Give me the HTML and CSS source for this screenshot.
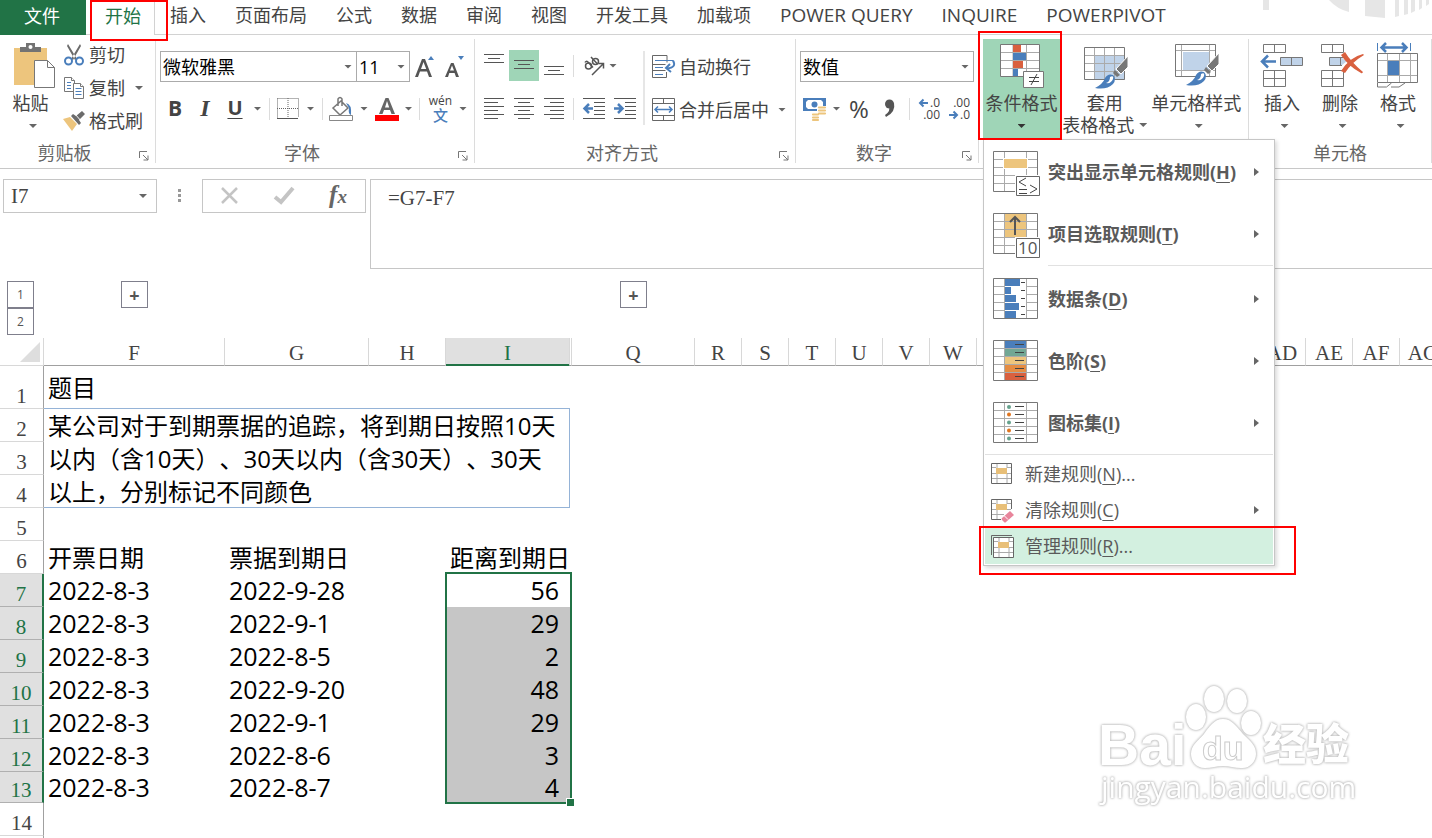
FILE: index.html
```html
<!DOCTYPE html>
<html lang="zh-CN">
<head>
<meta charset="utf-8">
<title>Excel</title>
<link rel="stylesheet" href="styles.css">
</head>
<body>
<header class="tabs">
  <button class="tab file">文件</button>
  <button class="tab active">开始<span class="mark mark-tab"></span></button>
  <button class="tab">插入</button>
  <button class="tab">页面布局</button>
  <button class="tab">公式</button>
  <button class="tab">数据</button>
  <button class="tab">审阅</button>
  <button class="tab">视图</button>
  <button class="tab">开发工具</button>
  <button class="tab">加载项</button>
  <button class="tab latin">POWER QUERY</button>
  <button class="tab latin">INQUIRE</button>
  <button class="tab latin">POWERPIVOT</button>
  <svg class="deco" width="182" height="30" viewBox="0 0 182 30" fill="#e6e6e6">
    <path d="M13 0h6v10h-6zM79 0h20v12Q87 9 79 0zM115 0h20v18l-20-2zM145 0h4v16l-4 1zM154 0h4v14l-4 1zM161 0h4v11l-4 2zM169 0h3v8l-3 2zM176 0h3v4l-3 2z"/>
  </svg>
</header>

<section class="ribbon">
  <div class="group g-clip">
    <div class="body">
      <button class="big paste">
        <svg width="42" height="46" viewBox="0 0 42 46"><path d="M0 5h33v37H0z" fill="#edc57d"/><path d="M6 9V4h6V0h9v4h6v5z" fill="#737373"/><circle cx="16.500" cy="4" r="2" fill="#fff"/><path d="M20.500 17.500h13l7 7v20h-20z" fill="#fff" stroke="#777"/><path d="M33.500 17.500v7h7" fill="none" stroke="#777"/></svg>
        <span>粘贴</span><i class="dn"></i>
      </button>
      <div class="stack">
        <button class="cmd"><svg width="20" height="22" viewBox="0 0 20 22"><path d="M4 0l9 15-2 1L3 2zM16 0L7 15l2 1 8-14z" fill="#6b6b6b"/><g fill="none" stroke="#4a7ebb" stroke-width="2"><circle cx="4.500" cy="17" r="3.500"/><circle cx="15.500" cy="17" r="3.500"/></g></svg>剪切</button>
        <button class="cmd"><svg width="20" height="22" viewBox="0 0 20 22" fill="#fff" stroke="#777"><path d="M.5.500h7l3 3v11H.5z"/><path d="M7.500.500v3h3" /><path d="M3 5.500h4M3 8.500h4M3 11.500h4" stroke="#4a7ebb"/><path d="M9.500 6.500h7l3 3v12h-10z"/><path d="M16.500 6.500v3h3"/><path d="M11.500 11.500h6M11.500 14.500h6M11.500 17.500h6" stroke="#4a7ebb"/></svg>复制<i class="dn"></i></button>
        <button class="cmd"><svg width="20" height="20" viewBox="0 0 20 20"><path d="M-1 8l7-2 7 7-5 7z" fill="#edc57d"/><path d="M7 5l2-2 3 2 6-5 3 3-6 6 2 3-2 2z" fill="#6b6b6b"/><path d="M10.500 2.500l8 9" stroke="#fff"/></svg>格式刷</button>
      </div>
    </div>
    <div class="label">剪贴板<svg class="launch" width="10" height="10" viewBox="0 0 10 10"><path d="M.5 7V.500H8M4 4l5 5M9 4.500V9H4.500" fill="none" stroke="#777"/></svg></div>
  </div>

  <div class="group g-font">
    <div class="body rows">
      <div class="row">
        <label class="drop drop-font"><select aria-label="字体"><option>微软雅黑</option></select><i class="dn"></i></label>
        <label class="drop drop-size"><select aria-label="字号"><option>11</option></select><i class="dn"></i></label>
        <button class="ico"><svg width="30" height="26" viewBox="0 0 30 26"><path d="M5 23L12 5h3l7 18h-3l-2-5.500H10L8 23zM11 15h5.200L13.500 8z" fill="#555"/><path d="M18 6l3-4 3 4z" fill="#4a7ebb"/></svg></button>
        <button class="ico"><svg width="30" height="26" viewBox="0 0 30 26"><path d="M5 23L11 9h2.600L19 23h-3l-1.400-4H9.300L8 23zM10 16.500h4L12 11.500z" fill="#555"/><path d="M18 2h6l-3 4z" fill="#4a7ebb"/></svg></button>
      </div>
      <div class="row font-tools">
        <button class="ico bold">B</button><button class="ico ital">I</button><button class="ico under">U</button><i class="dn"></i><i class="sep"></i>
        <button class="ico"><svg width="22" height="22" viewBox="0 0 22 22"><path d="M.5.500h21v19M.5.500v19M11 0v20M0 10.500h21" fill="none" stroke="#666" stroke-dasharray="1 1"/><path d="M0 20.500h21" stroke="#555"/></svg></button><i class="dn"></i><i class="sep"></i>
        <button class="ico"><svg width="25" height="24" viewBox="0 0 25 24"><path d="M12 4l7 7-8 7-7-7zM9 9V2q2-3 4 0v7" fill="#fff" stroke="#777" stroke-width="1.500"/><path d="M17 6q6 1 5 12-3-1-2-7z" fill="#4a7ebb"/><path d="M.5 18.500h23v5H.5z" fill="#fff" stroke="#888"/></svg></button><i class="dn"></i>
        <button class="ico"><svg width="24" height="24" viewBox="0 0 24 24"><path d="M4 17L10.500 1h3L20 17h-3.500L15 13H9l-1.500 4zM10 10.500h4.200L12 4z" fill="#666"/><path d="M0 18h24v6H0z" fill="#f00"/></svg></button><i class="dn"></i><i class="sep"></i>
        <button class="ico pinyin"><span>wén</span><b>文</b></button><i class="dn"></i>
      </div>
    </div>
    <div class="label">字体<svg class="launch" width="10" height="10" viewBox="0 0 10 10"><path d="M.5 7V.500H8M4 4l5 5M9 4.500V9H4.500" fill="none" stroke="#777"/></svg></div>
  </div>

  <div class="group g-align">
    <div class="body">
      <div class="align-tools">
        <button class="ico"><svg width="20" height="22" viewBox="0 0 20 22"><path d="M0 -.500h20M4 3.500h12M0 7.500h20" stroke="#555"/></svg></button>
        <button class="ico on"><svg width="20" height="22" viewBox="0 0 20 22"><path d="M0 5.500h20M4 9.500h12M0 13.500h20" stroke="#555"/></svg></button>
        <button class="ico"><svg width="20" height="22" viewBox="0 0 20 22"><path d="M0 11.500h20M4 15.500h12M0 19.500h20" stroke="#555"/></svg></button>
        <i class="sep"></i>
        <button class="ico"><svg width="22" height="22" viewBox="0 0 22 22"><g fill="none" stroke="#555" stroke-width="1.500"><circle cx="5.500" cy="11" r="3"/><path d="M2 7.500q1-2 3-.5l5 5.500M8 2l6.500 7"/><circle cx="12.500" cy="6.500" r="3"/><path d="M9 20L20 9M15.500 8.500H20.500V13.500"/></g></svg></button>
        <i class="dn dn-left"></i>
        <button class="ico"><svg width="20" height="22" viewBox="0 0 20 22"><path d="M0 .500h20M0 4.500h14M0 8.500h20M0 12.500h14M0 16.500h20M0 20.500h14" stroke="#555"/></svg></button>
        <button class="ico"><svg width="20" height="22" viewBox="0 0 20 22"><path d="M0 .500h20M4 4.500h12M0 8.500h20M4 12.500h12M0 16.500h20M4 20.500h12" stroke="#555"/></svg></button>
        <button class="ico"><svg width="20" height="22" viewBox="0 0 20 22"><path d="M0 .500h20M6 4.500h14M0 8.500h20M6 12.500h14M0 16.500h20M6 20.500h14" stroke="#555"/></svg></button>
        <i class="sep"></i>
        <button class="ico"><svg width="22" height="22" viewBox="0 0 22 22"><path d="M0 .500h22M11 4.500h11M11 8.500h11M11 12.500h11M11 16.500h11M0 20.500h22" stroke="#555"/><path d="M10 10.500H2M6 6l-4.500 4.500L6 15" fill="none" stroke="#4a7ebb" stroke-width="2.500"/></svg></button>
        <button class="ico"><svg width="22" height="22" viewBox="0 0 22 22"><path d="M0 .500h22M11 4.500h11M11 8.500h11M11 12.500h11M11 16.500h11M0 20.500h22" stroke="#555"/><path d="M0 10.500h8M4 6l4.500 4.500L4 15" fill="none" stroke="#4a7ebb" stroke-width="2.500"/></svg></button>
      </div>
      <i class="tall-sep"></i>
      <div class="merge-tools">
        <button class="cmd"><svg width="24" height="24" viewBox="0 0 24 24" fill="none"><path d="M15 7.500V.500H.5v22h14V17M.5 9.500h13M.5 15.500h13" stroke="#666"/><path d="M3 5.500h18M3 12.500h8M3 19.500h8" stroke="#4a7ebb"/><path d="M21 5.500q4 7-6 8M18 9l-4 4 5 4" stroke="#4a7ebb" stroke-width="2"/></svg>自动换行</button>
        <button class="cmd"><svg width="24" height="24" viewBox="0 0 24 24" fill="none"><path d="M.5.500h22v22H.5zM.5 5.500h22M.5 17.500h22M11.500.500v5M11.500 17.500v5" stroke="#666"/><path d="M3 11.500h17M6 8.500l-3 3 3 3M17 8.500l3 3-3 3" stroke="#4a7ebb" stroke-width="1.500"/></svg>合并后居中<i class="dn"></i></button>
      </div>
    </div>
    <div class="label">对齐方式<svg class="launch" width="10" height="10" viewBox="0 0 10 10"><path d="M.5 7V.500H8M4 4l5 5M9 4.500V9H4.500" fill="none" stroke="#777"/></svg></div>
  </div>

  <div class="group g-num">
    <div class="body rows">
      <div class="row">
        <label class="drop drop-num"><select aria-label="数字格式"><option>数值</option></select><i class="dn"></i></label>
      </div>
      <div class="row num-tools">
        <button class="ico"><svg width="24" height="24" viewBox="0 0 24 24"><path d="M0 1h23v13H0z" fill="#4a7ebb"/><path d="M3 3h17v9H3z" fill="#fff"/><path d="M2 2h4L2 6zM21 2v4l-4-4zM2 13h4L2 9z" fill="#4a7ebb"/><circle cx="11.500" cy="7.500" r="3" fill="#4a7ebb"/><path d="M14 9h10v8h-7v6H7v-7h7z" fill="#fff"/><path d="M16 10.500h6M16 13.500h6M16 16.500h6M10 17.500h5M10 20.500h5M10 23h5" stroke="#edc57d" stroke-width="2.200" stroke-linecap="round"/></svg></button><i class="dn"></i>
        <button class="ico pct">%</button>
        <button class="ico"><svg width="12" height="20" viewBox="0 0 12 20"><circle cx="5.500" cy="5" r="4.500" fill="#555"/><path d="M10 4q2 9-8 14l-1-2q6-4 4-9z" fill="#555"/></svg></button>
        <i class="sep"></i>
        <button class="ico dec"><span><svg width="9" height="8" viewBox="0 0 9 8"><path d="M9 4H1M4.500 .500L1 4l3.500 3.500" fill="none" stroke="#4a7ebb" stroke-width="2"/></svg>.0</span><span>.00</span></button>
        <button class="ico dec"><span>.00</span><span><svg width="9" height="8" viewBox="0 0 9 8"><path d="M0 4h8M4.500 .500L8 4 4.500 7.500" fill="none" stroke="#4a7ebb" stroke-width="2"/></svg>.0</span></button>
      </div>
    </div>
    <div class="label">数字<svg class="launch" width="10" height="10" viewBox="0 0 10 10"><path d="M.5 7V.500H8M4 4l5 5M9 4.500V9H4.500" fill="none" stroke="#777"/></svg></div>
  </div>

  <div class="group g-style">
    <div class="body">
      <div class="cond">
        <button class="big big-on">
          <svg width="44" height="46" viewBox="0 0 44 46"><path d="M.5 1.500h39v32H.5z" fill="#fff"/><path d="M13 1v33M26.500 1v33M1 9.500h39M1 17.500h39M1 25.500h39" stroke="#aaa"/><path d="M13 2h8v7h-8zM13 18h10v7H13z" fill="#d9603f"/><path d="M13 10h13v7H13zM13 26h5v7h-5z" fill="#4a7ebb"/><path d="M.5 1.500h39v32H.5z" fill="none" stroke="#777"/><path d="M23.500 28.500h20v16h-20z" fill="#fff" stroke="#777"/><path d="M29 34.500h10M29 38.500h10M37 31l-6 11" stroke="#444"/></svg>
          <span>条件格式</span><i class="dn dark"></i>
        </button>
        <div class="menu" role="menu">
          <button class="item lg" role="menuitem"><svg width="48" height="46" viewBox="0 0 48 46"><path d="M.5.500h44v40H.5z" fill="#fff" stroke="#777"/><path d="M11.500 1v39M33.500 1v39M1 8.500h43M1 16.500h43M1 24.500h43M1 32.500h43" stroke="#aaa"/><path d="M12 1h21v7H12z" fill="#fff"/><path d="M10 7h25v11H10z" fill="#fff"/><path d="M11 8h23v9H11z" fill="#edc57d"/><path d="M22 24h26v22H22z" fill="#fff"/><path d="M23.500 25.500h23v19h-23z" fill="#fff" stroke="#666"/><path d="M33 27l-7 4 7 4M26 38.500h8M26 42.500h8M37 34l7 4-7 4" fill="none" stroke="#444"/></svg><span>突出显示单元格规则(<u>H</u>)</span><i class="rt"></i></button>
          <button class="item lg" role="menuitem"><svg width="48" height="46" viewBox="0 0 48 46"><path d="M.5.500h44v40H.5z" fill="#fff"/><path d="M12 1h21v23H12z" fill="#edc57d"/><path d="M11.500 1v39M33.500 1v39M1 8.500h43M1 16.500h43M1 24.500h43M1 32.500h43" stroke="#aaa"/><path d="M.5.500h44v40H.5z" fill="none" stroke="#777"/><path d="M22 22V4M17 9l5-5 5 5" fill="none" stroke="#555" stroke-width="2"/><path d="M22 24h26v22H22z" fill="#fff"/><path d="M23.500 25.500h23v19h-23z" fill="#fff" stroke="#666"/><text x="25" y="41" font-family="Open Sans" font-weight="400" font-size="17" fill="#555">10</text></svg><span>项目选取规则(<u>T</u>)</span><i class="rt"></i></button>
          <hr class="inset">
          <button class="item lg" role="menuitem"><svg width="48" height="46" viewBox="0 0 48 46"><path d="M.5.500h44v40H.5z" fill="#fff"/><path d="M11.500 1v39M33.500 1v39M1 8.500h43M1 16.500h43M1 24.500h43M1 32.500h43" stroke="#aaa"/><path d="M12 1h21v39H12z" fill="#fff"/><path d="M12 1h15v7H12zM12 9h6v7h-6zM12 17h11v7H12zM12 25h14v7H12zM12 33h11v7H12z" fill="#4a7ebb"/><path d="M.5.500h44v40H.5z" fill="none" stroke="#777"/><path d="M28 4.500h4M28 12.500h4M28 20.500h4M28 28.500h4M28 36.500h4" stroke="#444"/></svg><span>数据条(<u>D</u>)</span><i class="rt"></i></button>
          <button class="item lg" role="menuitem"><svg width="48" height="46" viewBox="0 0 48 46"><path d="M.5.500h44v40H.5z" fill="#fff"/><path d="M12 1h21v8H12z" fill="#4a7ebb"/><path d="M12 9h21v8H12z" fill="#72a794"/><path d="M12 17h21v8H12z" fill="#edc57d"/><path d="M12 25h21v8H12z" fill="#e58c42"/><path d="M12 33h21v7H12z" fill="#d9603f"/><path d="M11.500 1v39M33.500 1v39M1 8.500h43M1 16.500h43M1 24.500h43M1 32.500h43" stroke="#aaa"/><path d="M.5.500h44v40H.5z" fill="none" stroke="#777"/><path d="M22 4.500h9M22 12.500h9M22 20.500h9M22 28.500h9M22 36.500h9" stroke="#444"/></svg><span>色阶(<u>S</u>)</span><i class="rt"></i></button>
          <button class="item lg" role="menuitem"><svg width="48" height="46" viewBox="0 0 48 46"><path d="M.5.500h44v40H.5z" fill="#fff"/><path d="M11.500 1v39M33.500 1v39M1 8.500h43M1 16.500h43M1 24.500h43M1 32.500h43" stroke="#aaa"/><path d="M.5.500h44v40H.5z" fill="none" stroke="#777"/><g fill="#66a28d"><circle cx="16" cy="5" r="2"/><circle cx="16" cy="20.500" r="2"/><circle cx="16" cy="36.500" r="2"/></g><g fill="#e0751f"><circle cx="16" cy="12.500" r="2"/><circle cx="16" cy="28.500" r="2"/></g><path d="M22 4.500h9M22 12.500h9M22 20.500h9M22 28.500h9M22 36.500h9" stroke="#444"/></svg><span>图标集(<u>I</u>)</span><i class="rt"></i></button>
          <hr>
          <button class="item" role="menuitem"><svg width="24" height="24" viewBox="0 0 24 24"><path d="M.5 1.500h20v20H.5z" fill="#fff"/><path d="M6 2v4M16 2v4M1 5.500h4M16 5.500h4M1 11.500h4M16 11.500h4M1 16.500h19M6 12v9M16 12v9" stroke="#aaa"/><path d="M5 6h11v6H5z" fill="#e8bf78"/><path d="M.5 1.500h20v20H.5z" fill="none" stroke="#666"/></svg><span>新建规则(<u>N</u>)...</span></button>
          <button class="item" role="menuitem"><svg width="24" height="24" viewBox="0 0 24 24"><path d="M6 2v4M16 2v4M1 5.500h4M16 5.500h4M1 11.500h4M16 11.500h4M1 16.500h12M6 12v9" stroke="#aaa"/><path d="M5 6h11v6H5z" fill="#e8bf78"/><path d="M20.500 11V1.500H.5v20H10" fill="none" stroke="#666"/><path d="M11 20l8-7 4 4-8 7q-1 1-2 0l-2-2q-1-1 0-2z" fill="#e8859b"/><path d="M13 17.500l4 4" stroke="#fff"/></svg><span>清除规则(<u>C</u>)</span><i class="rt"></i></button>
          <button class="item hot" role="menuitem"><svg width="24" height="24" viewBox="0 0 24 24"><path d="M.5 21V1.500H21" fill="none" stroke="#666"/><path d="M2.500 3.500h20v20h-20z" fill="#fff"/><path d="M8 4v4M18 4v4M3 7.500h4M18 7.500h4M3 13.500h4M18 13.500h4M3 18.500h19M8 14v9M18 14v9" stroke="#aaa"/><path d="M7 8h11v6H7z" fill="#e8bf78"/><path d="M2.500 3.500h20v20h-20z" fill="none" stroke="#666"/></svg><span>管理规则(<u>R</u>)...</span><span class="mark mark-item"></span></button>
        </div>
        <span class="mark mark-cond"></span>
      </div>
      <button class="big wide">
        <svg width="42" height="46" viewBox="0 0 42 46"><path d="M.5 4.500h40v32H.5z" fill="#fff"/><path d="M11 13h30v24H11z" fill="#c0d3e9"/><path d="M10.500 5v31M20.500 5v31M30.500 5v31M1 12.500h39M1 20.500h39M1 28.500h39" stroke="#aaa"/><path d="M.5 4.500h40v32H.5z" fill="none" stroke="#777"/><path d="M44 13v11l-7 7-5-5z" fill="#777" stroke="#fff"/><path d="M31 27l5 5-3 2-4-4z" fill="#777"/><path d="M11 45q8-4 10-10 3-5 8-3 4 4 0 9-6 6-18 4z" fill="#4a7ebb"/><path d="M26 34q4-2 3 2-2 5-7 4 4-1 4-6z" fill="#fff"/></svg>
        <span>套用</span><span class="second">表格格式<i class="dn"></i></span>
      </button>
      <button class="big xwide">
        <svg width="42" height="46" viewBox="0 0 42 46"><path d="M.5 1.500h40v32H.5z" fill="#fff"/><path d="M6.500 2v31M34.500 2v31M1 7.500h39M1 27.500h39" stroke="#aaa"/><path d="M8 9h26v18H8z" fill="#c0d3e9"/><path d="M.5 1.500h40v32H.5z" fill="none" stroke="#777"/><path d="M44 10v11l-7 7-5-5z" fill="#777" stroke="#fff"/><path d="M31 24l5 5-3 2-4-4z" fill="#777"/><path d="M11 42q8-4 10-10 3-5 8-3 4 4 0 9-6 6-18 4z" fill="#4a7ebb"/><path d="M26 31q4-2 3 2-2 5-7 4 4-1 4-6z" fill="#fff"/></svg>
        <span>单元格样式</span><i class="dn"></i>
      </button>
    </div>
    <div class="label"></div>
  </div>

  <div class="group g-cell">
    <div class="body">
      <button class="big cellbtn"><svg width="44" height="46" viewBox="0 0 44 46" fill="none"><path d="M3.500 1.500h22v8h-22zM14.500 1.500v8M3.500 27.500h22v16h-22zM14.500 27.500v16M3.500 35.500h22" stroke="#777"/><path d="M20.500 14.500h22v8h-22z" fill="#c0d3e9" stroke="#777"/><path d="M31.500 14.500v8" stroke="#777"/><path d="M16 18.500H2M8 12.500l-6 6 6 6" stroke="#4a7ebb" stroke-width="2.500"/></svg><span>插入</span><i class="dn"></i></button>
      <button class="big cellbtn"><svg width="44" height="46" viewBox="0 0 44 46" fill="none"><path d="M3.500 1.500h22v8h-22zM14.500 1.500v8M3.500 27.500h22v16h-22zM14.500 27.500v16M3.500 35.500h22" stroke="#777"/><path d="M11.500 14.500h12l5 4-5 4h-12z" fill="#c0d3e9"/><path d="M26 14.500H11.500v8H24M22.500 14.500v8" stroke="#777"/><path d="M23 12l4-3q6 10 18 20-1 2-2 1Q30 23 23 12zM45 11l1 1Q34 19 27 30l-4-2Q32 14 45 11z" fill="#d9603f"/></svg><span>删除</span><i class="dn"></i></button>
      <button class="big cellbtn"><svg width="44" height="46" viewBox="0 0 44 46" fill="none"><path d="M1.500 0v8M34.500 0v8" stroke="#4a7ebb"/><path d="M6 4.500h24M10 0L5.500 4.500 10 9M26 0l4.500 4.500L26 9" stroke="#4a7ebb" stroke-width="2.500"/><path d="M11.500 11v28M23.500 11v28M34.500 11v28M2 17.500h39M2 32.500h39" stroke="#aaa"/><path d="M1.500 10.500h40v29h-40z" stroke="#777"/><path d="M12 18h11v14H12z" fill="#4a7ebb"/><path d="M1.500 40v4h9l5-4M15 44h8l6-4" stroke="#777"/></svg><span>格式</span><i class="dn"></i></button>
    </div>
    <div class="label">单元格</div>
  </div>
</section>

<section class="formula-bar">
  <div class="name-box"><input aria-label="名称框" value="I7"><i class="dn"></i></div>
  <svg class="dots" width="4" height="34" viewBox="0 0 4 34" fill="#999"><path d="M0 10h3v3H0zM0 15h3v3H0zM0 20h3v3H0z"/></svg>
  <div class="fx">
    <button class="ico" aria-label="取消"><svg width="18" height="18" viewBox="0 0 18 18"><path d="M1 1l15 15M16 1L1 16" stroke="#c4c4c4" stroke-width="2.500"/></svg></button>
    <button class="ico" aria-label="输入"><svg width="20" height="18" viewBox="0 0 20 18"><path d="M1 10l6 5L19 1" fill="none" stroke="#c4c4c4" stroke-width="4"/></svg></button>
    <button class="ico fxt">f<small>x</small></button>
  </div>
  <textarea aria-label="编辑栏">=G7-F7</textarea>
</section>

<main class="sheet">
  <div class="outline">
    <div class="levels"><button>1</button><button>2</button></div>
    <button class="plus p1">+</button>
    <button class="plus p2">+</button>
  </div>
  <table class="grid">
    <colgroup><col class="c-h"><col class="c-f"><col class="c-g"><col class="c-hh"><col class="c-i"><col class="c-x"><col class="c-q"><col class="c-n" span="16"></colgroup>
    <thead>
      <tr><th class="corner"><svg width="20" height="20" viewBox="0 0 20 20"><path d="M20 0v20H0z" fill="#dedede"/></svg></th><th>F</th><th>G</th><th>H</th><th class="sel">I</th><th></th><th>Q</th><th>R</th><th>S</th><th>T</th><th>U</th><th>V</th><th>W</th><th></th><th></th><th></th><th></th><th></th><th></th><th>AD</th><th>AE</th><th>AF</th><th>AG</th></tr>
    </thead>
    <tbody>
      <tr class="r1"><th>1</th><td>题目</td></tr>
      <tr><th>2</th><td class="note" colspan="4" rowspan="3">某公司对于到期票据的追踪，将到期日按照10天<br>以内（含10天）、30天以内（含30天）、30天<br>以上，分别标记不同颜色</td></tr>
      <tr><th>3</th></tr>
      <tr><th>4</th></tr>
      <tr><th>5</th></tr>
      <tr><th>6</th><td>开票日期</td><td>票据到期日</td><td></td><td class="head">距离到期日</td></tr>
      <tr class="s"><th>7</th><td>2022-8-3</td><td>2022-9-28</td><td></td><td class="num first">56<span class="selection"></span></td></tr>
      <tr class="s"><th>8</th><td>2022-8-3</td><td>2022-9-1</td><td></td><td class="num">29</td></tr>
      <tr class="s"><th>9</th><td>2022-8-3</td><td>2022-8-5</td><td></td><td class="num">2</td></tr>
      <tr class="s"><th>10</th><td>2022-8-3</td><td>2022-9-20</td><td></td><td class="num">48</td></tr>
      <tr class="s"><th>11</th><td>2022-8-3</td><td>2022-9-1</td><td></td><td class="num">29</td></tr>
      <tr class="s"><th>12</th><td>2022-8-3</td><td>2022-8-6</td><td></td><td class="num">3</td></tr>
      <tr class="s r13"><th>13</th><td>2022-8-3</td><td>2022-8-7</td><td></td><td class="num">4</td></tr>
      <tr><th>14</th></tr>
      <tr><th></th></tr>
    </tbody>
  </table>
</main>

<svg class="watermark" width="270" height="134" viewBox="0 0 270 134" fill="#fff">
  <text x="3" y="81" font-family="Liberation Sans" font-weight="700" font-size="57">Bai</text>
  <ellipse cx="101" cy="33" rx="10" ry="13"/>
  <ellipse cx="119" cy="15" rx="10" ry="13"/>
  <ellipse cx="142" cy="17" rx="10" ry="12"/>
  <ellipse cx="156" cy="39" rx="10" ry="12"/>
  <path d="M128 35c9 0 14 8 20 15 7 7 13 11 13 20 0 8-7 15-15 14-6 0-12-2-18-2s-12 2-18 2c-9 0-14-7-14-14 0-9 7-13 13-20 5-7 10-15 19-15z"/>
  <text class="wm-du" x="107" y="76" font-family="Liberation Sans" font-weight="700" font-size="34">du</text>
  <text x="168" y="76" font-family="Noto Sans CJK SC" font-weight="900" font-size="43">经验</text>
  <text x="6" y="114" font-family="Open Sans" font-size="30">jingyan.baidu.com</text>
</svg>
</body>
</html>
```

FILE: styles.css
```css
* { box-sizing: border-box; }
body {
  margin: 0;
  height: 100vh;
  overflow: hidden;
  background: #fff;
  color: #444;
  font-family: "Open Sans", "Noto Sans CJK SC", sans-serif;
  font-size: 18px;
  line-height: 24px;
}
button, input, select, textarea { font: inherit; color: inherit; margin: 0; padding: 0; border: 0; background: none; border-radius: 0; }
button { cursor: pointer; }
svg { display: block; flex: none; overflow: visible; }
i { font-style: normal; }

.dn { flex: none; width: 8px; height: 4px; background: #666; clip-path: polygon(0 0, 100% 0, 50% 100%); justify-self: center; align-self: center; }
.dn.dark { background: #333; }
.rt { width: 5px; height: 8px; background: #666; clip-path: polygon(0 0, 100% 50%, 0 100%); }
.sep { width: 1px; height: 22px; background: #dcdcdc; justify-self: center; align-self: center; }
.mark { position: absolute; border: 2px solid #f00; pointer-events: none; z-index: 5; }

/* tabs */
.tabs { position: relative; display: flex; gap: 1px; height: 35px; border-bottom: 1px solid #d2d2d2; }
.tab { position: relative; height: 34px; padding: 0 14px 4px; white-space: nowrap; }
.latin { font-size: 19px; }
.file { width: 86px; height: 35px; padding-left: 12px; background: #217346; color: #fff; }
.tab.active { height: 35px; margin-left: 4px; border: solid #d2d2d2; border-width: 0 1px; padding: 0 13px 4px; background: #fff; color: #217346; }
.mark-tab { inset: 0 -14px -6px -2px; }
.deco { position: absolute; right: 0; top: 0; }

/* ribbon */
.ribbon { display: flex; padding: 4px 0 5px; border-bottom: 1px solid #c8c8c8; height: 134px; }
.group { display: flex; flex-direction: column; flex: none; border-right: 1px solid #dcdcdc; }
.g-clip { width: 156px; }
.g-font { width: 319px; }
.g-align { width: 321px; }
.g-num { width: 183px; }
.g-style { width: 270px; }
.g-cell { width: 183px; }
.body { display: flex; align-items: flex-start; height: 106px; padding: 0 4px; }
.rows { flex-direction: column; padding-top: 12px; gap: 11px; }
.row { display: flex; align-items: center; height: 31px; }
.label { display: flex; align-items: center; justify-content: center; position: relative; height: 20px; padding-right: 26px; color: #666; }
.launch { position: absolute; right: 6px; bottom: 2px; }
.ico { display: flex; align-items: center; justify-content: center; height: 30px; min-width: 30px; }
.big { position: relative; display: flex; flex-direction: column; align-items: center; height: 100px; padding-top: 4px; white-space: nowrap; }
.big > span { line-height: 22px; padding-top: 3px; }
.big > .dn { margin-top: 10px; }
.paste { width: 58px; padding-left: 3px; }
.paste > span { margin-left: -8px; }
.paste > .dn { margin-left: -3px; }
.stack { display: flex; flex-direction: column; }
.cmd { display: flex; align-items: center; gap: 5px; height: 33px; white-space: nowrap; }
.stack .cmd { padding: 0 0 1px 2px; }
.cmd .dn { margin-left: 5px; }

.drop { display: grid; height: 31px; border: 1px solid #ababab; color: #000; }
.drop select { grid-area: 1 / 1; appearance: none; padding-left: 2px; outline: 0; }
.drop .dn { grid-area: 1 / 1; justify-self: end; margin-right: 4px; pointer-events: none; }
.drop-font { width: 197px; margin-right: -1px; }
.drop-size { width: 54px; }
.drop-num { width: 174px; }
.font-tools { display: grid; grid-template-columns: 30px 30px 30px 15px 8px 30px 15px 8px 31px 14px 31px 13px 9px 33px 12px; }
.bold { font-size: 21px; font-weight: 700; padding-bottom: 2px; }
.ital { font-family: "Liberation Serif", serif; font-size: 24px; font-weight: 700; font-style: italic; padding-bottom: 2px; }
.under { font-size: 20px; font-weight: 700; padding-bottom: 2px; text-decoration: underline; text-decoration-thickness: 1px; text-underline-offset: 3px; }
.pinyin { flex-direction: column; font-size: 12px; line-height: 12px; }
.pinyin b { font-weight: 500; font-size: 15px; line-height: 16px; color: #4a7ebb; }

.align-tools { display: grid; grid-template-columns: 30px 30px 30px 9px 31px 31px; grid-template-rows: 31px 31px; row-gap: 12px; padding-top: 11px; align-items: center; }
.align-tools .ico { height: 31px; }
.align-tools .dn-left { justify-self: start; }
.ico.on { background: #9fd5b7; }
.tall-sep { width: 2px; height: 74px; margin: 12px 7px 0 3px; background: #e6e6e6; }
.merge-tools { display: flex; flex-direction: column; gap: 10px; padding-top: 11px; }
.merge-tools .cmd { gap: 3px; }
.merge-tools .dn { margin-left: 6px; }
.num-tools { display: grid; grid-template-columns: 30px 13px 32px 30px 9px 30px 30px; }
.pct { font-size: 24px; }
.dec { flex-direction: column; align-items: flex-end; padding-right: 4px; font-size: 12px; line-height: 12px; }
.dec span { display: flex; align-items: center; gap: 2px; }

.cond { position: relative; }
.g-style .body { padding: 0 4px; }
.big-on { width: 78px; padding-right: 1px; background: #9fd5b7; }
.wide { width: 88px; }
.xwide { width: 96px; }
.xwide > .dn, .cellbtn > .dn { margin-left: 5px; }
.second { display: flex; align-items: center; gap: 5px; }
.big > .second { padding-top: 0; }
.cellbtn { width: 58px; }
.g-cell .label { padding-right: 0; }
.mark-cond { inset: -8px -1px -1px -5px; }

/* drop-down menu */
.menu { position: absolute; z-index: 4; top: 100px; left: 0; width: 292px; padding: 1px; border: 1px solid #c6c6c6; background: #fff; box-shadow: 2px 2px 4px rgba(0, 0, 0, .15); color: #5a5a5a; }
.item { position: relative; display: flex; align-items: center; gap: 10px; width: 100%; height: 36px; padding: 0 14px 0 6px; text-align: left; white-space: nowrap; }
.item.lg { height: 62px; padding-left: 8px; gap: 7px; font-weight: 700; }
.lg svg { margin-top: 3px; }
.item .rt { margin-left: auto; }
.item.hot { background: #d3f0e0; }
.item u { text-decoration-thickness: 1px; text-underline-offset: 3px; }
.menu hr { height: 1px; margin: 0 0 1px; border: 0; background: #e1e1e1; }
.menu hr.inset { margin: 0 0 2px 63px; }
.mark-item { inset: -2px -23px -11px -6px; }

/* formula bar */
.formula-bar { display: flex; align-items: flex-start; padding: 10px 0 0 3px; font-family: "Liberation Serif", "Noto Sans CJK SC", serif; font-size: 21px; }
.name-box { display: flex; width: 154px; height: 34px; padding-right: 9px; border: 1px solid #c6c6c6; }
.name-box input { flex: 1; min-width: 0; padding-left: 7px; }
.dots { margin: 0 20px 0 21px; }
.fx { display: flex; justify-content: space-around; align-items: center; width: 164px; height: 34px; margin-right: 4px; border: 1px solid #c6c6c6; }
.fxt { font-size: 25px; font-style: italic; font-weight: 700; color: #666; align-items: baseline; padding-top: 2px; }
.fxt small { font-size: 19px; }
.formula-bar textarea { flex: 1; height: 90px; padding: 6px 17px; border: 1px solid #c6c6c6; border-right: 0; resize: none; outline: 0; }

/* sheet */
.sheet { overflow: hidden; }
.outline { display: grid; grid-template-columns: 44px 181px 144px 77px 124px 2px 123px; height: 69px; padding-top: 12px; justify-items: center; align-items: start; }
.outline button { display: block; width: 27px; height: 27px; border: 1px solid #7f7f8c; font-size: 12px; line-height: 24px; color: #555; }
.levels { justify-self: start; padding-left: 7px; }
.outline .plus { font-size: 18px; font-weight: 700; }
.p1 { grid-column: 2; }
.p2 { grid-column: 7; }

.grid { width: 1447px; table-layout: fixed; border-collapse: separate; border-spacing: 0; color: #000; font-size: 24px; line-height: 31px; }
.c-h { width: 44px; }
.c-f { width: 181px; }
.c-g { width: 144px; }
.c-hh { width: 77px; }
.c-i { width: 124px; }
.c-x { width: 2px; }
.c-q { width: 123px; }
.c-n { width: 47px; }
.grid th { padding: 0; font: 400 21px/24px "Liberation Serif", serif; color: #444; }
thead th { height: 28px; border-right: 1px solid #d8d8d8; border-bottom: 1px solid #a0a0a0; vertical-align: bottom; }
thead .corner { border-color: #d8d8d8; }
.corner svg { margin: 0 0 3px 20px; }
.grid th.sel { background: #e0e0e0; border-bottom-color: #217346; box-shadow: inset 0 -1px #217346; color: #217346; }
tbody tr { height: 33px; }
tbody .r1 { height: 43px; }
tbody .r13 { height: 31px; }
tbody th { vertical-align: bottom; border-right: 1px solid #a0a0a0; border-bottom: 1px solid #d8d8d8; }
.grid .s th { background: #e0e0e0; border-right: 2px solid #217346; border-bottom-color: #b0b0b0; color: #217346; }
.grid td { padding: 0 0 0 4px; white-space: nowrap; vertical-align: middle; }
.grid td.note { line-height: 33px; box-shadow: 0 -1px #95b3d7, inset -1px -1px #95b3d7; text-spacing-trim: space-all; }
.s td { font-size: 25px; }
.grid td.num { background: #c6c6c6; padding-right: 11px; text-align: right; }
.grid td.first { position: relative; background: #fff; }
.selection { position: absolute; inset: -2px -2px auto -1px; height: 232px; border: 2px solid #217346; pointer-events: none; }
.selection::after { content: ""; position: absolute; right: -4px; bottom: -4px; width: 7px; height: 7px; border: solid #fff; border-width: 1px 0 0 1px; background: #217346; }

.watermark { position: absolute; right: 67px; bottom: 20px; filter: drop-shadow(0 0 1px #bbb) drop-shadow(0 0 1px #ccc); }
.wm-du { stroke: #ccc; stroke-width: 1px; }
```
